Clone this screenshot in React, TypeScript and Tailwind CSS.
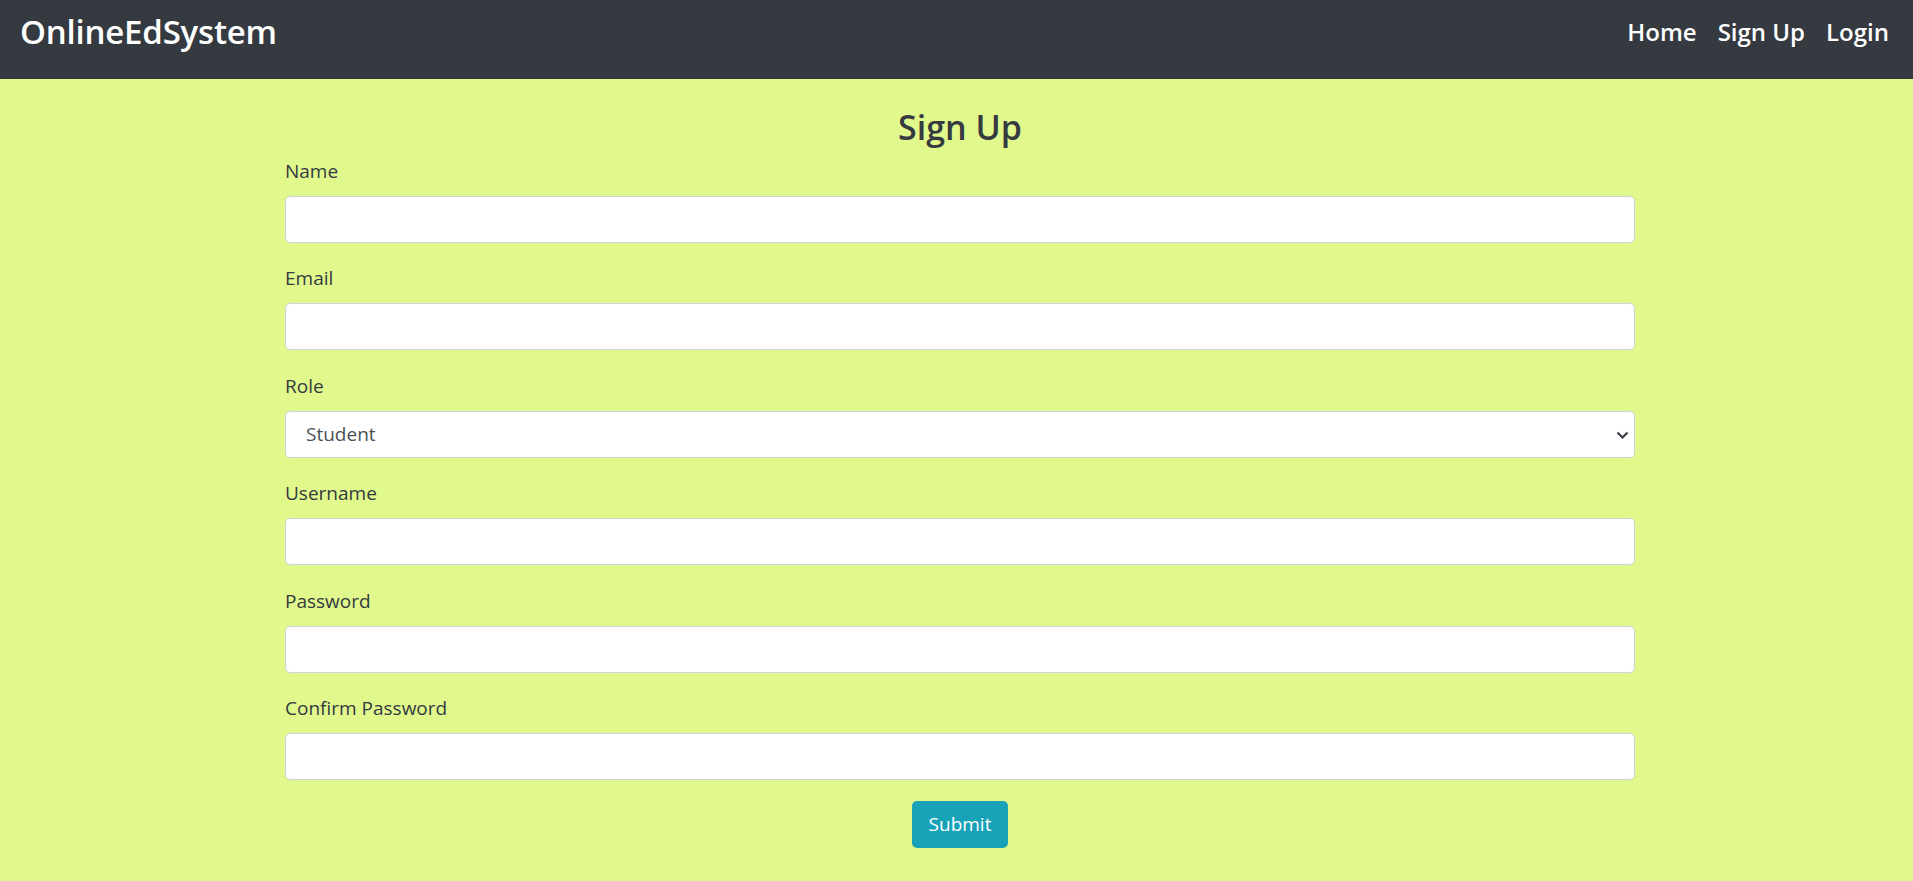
import React from "react";

const fields = [
  { label: "Name", type: "text" },
  { label: "Email", type: "email" },
  { label: "Role", type: "select" },
  { label: "Username", type: "text" },
  { label: "Password", type: "password" },
  { label: "Confirm Password", type: "password" },
];

export default function App() {
  return (
    <div className="min-h-screen bg-[#e0f88c] font-['Open_Sans',sans-serif] text-[#343a40]">
      <nav className="h-[79px] bg-[#343a40] flex items-start justify-between pl-[20px] pr-[24px]">
        <div className="mt-[11px] text-[33px] leading-[41px] font-semibold text-white tracking-[-0.2px]">
          OnlineEdSystem
        </div>
        <ul className="mt-[16px] flex gap-[21px] text-[24px] leading-[32px] font-semibold text-white">
          <li>Home</li>
          <li>Sign Up</li>
          <li>Login</li>
        </ul>
      </nav>
      <div className="ml-[285px] w-[1350px]">
        <h3 className="mt-[28px] mb-[9px] text-center text-[34px] leading-[41px] font-semibold text-[#343a40]">
          Sign Up
        </h3>
        <form onSubmit={(e) => e.preventDefault()}>
          {fields.map((f) => (
            <div key={f.label} className="mb-[21.4px]">
              <label className="block text-[19px] leading-[29px] mb-[10px] text-[#343a40]">
                {f.label}
              </label>
              {f.type === "select" ? (
                <div className="relative">
                  <select
                    defaultValue="Student"
                    className="appearance-none block w-full h-[47px] bg-white border border-[#ced4da] rounded-[5px] pl-[20px] text-[19px] text-[#495057] outline-none"
                  >
                    <option>Student</option>
                    <option>Teacher</option>
                  </select>
                  <svg
                    className="absolute right-[6px] top-[20px] pointer-events-none"
                    width="13"
                    height="8"
                    viewBox="0 0 13 8"
                  >
                    <path d="M1.5 1.5l5 5 5-5" fill="none" stroke="#3d4248" strokeWidth="2.2" />
                  </svg>
                </div>
              ) : (
                <input
                  type={f.type}
                  className="block w-full h-[47px] bg-white border border-[#ced4da] rounded-[5px] px-[15px] text-[19px] text-[#495057] outline-none"
                />
              )}
            </div>
          ))}
          <div className="flex justify-center">
            <button
              type="submit"
              className="w-[96px] h-[47px] bg-[#17a2b8] text-white rounded-[5px] text-[19px] leading-[29px]"
            >
              Submit
            </button>
          </div>
        </form>
      </div>
    </div>
  );
}
